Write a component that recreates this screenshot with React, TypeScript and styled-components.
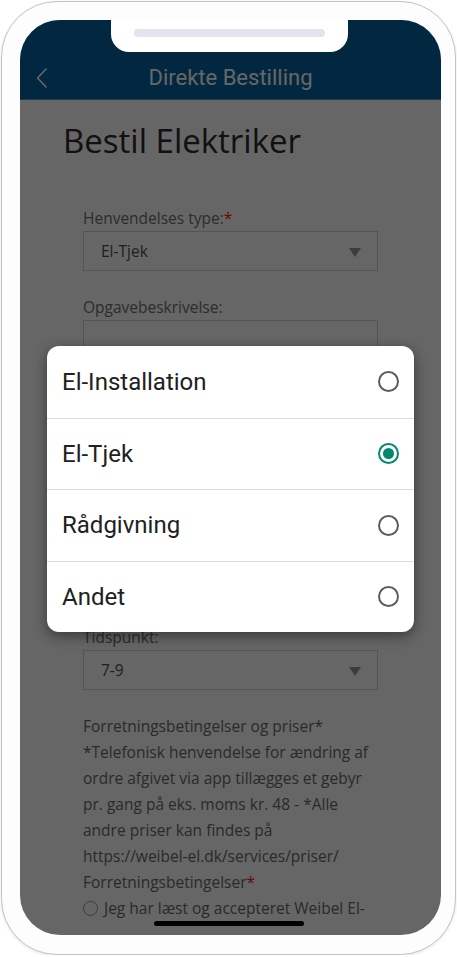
import React from "react";
import styled, { createGlobalStyle } from "styled-components";

const GlobalStyle = createGlobalStyle`
  html, body { margin: 0; padding: 0; background: #ffffff; }
  body { font-family: "Open Sans", "Liberation Sans", sans-serif; }
  * { box-sizing: border-box; }
`;

const Phone = styled.div`
  width: 455px;
  height: 954px;
  margin: 1px 0 0 1px;
  border: 1px solid #c4c4c4;
  border-radius: 56px;
  background: #fdfdfd;
  box-shadow: 0 1px 3px rgba(0, 0, 0, 0.1);
  padding: 18px 14px 19px 18px;
`;

const Screen = styled.div`
  position: relative;
  width: 421px;
  height: 915px;
  border-radius: 40px;
  overflow: hidden;
  background: #ffffff;
`;

const Header = styled.header`
  height: 80px;
  padding-top: 36px;
  background: #0362a2;
  border-bottom: 1px solid #5a8fbf;
`;

const HeaderRow = styled.div`
  display: grid;
  grid-template-columns: 1fr auto 1fr;
  align-items: center;
  height: 43px;
  padding: 0 16px;
`;

const BackButton = styled.button`
  justify-self: start;
  display: flex;
  align-items: center;
  padding: 0;
  border: 0;
  background: none;
`;

const HeaderTitle = styled.h2`
  margin: 0;
  font-family: Roboto, "Liberation Sans", sans-serif;
  font-weight: 400;
  font-size: 22px;
  color: #ffffff;
`;

const Content = styled.main`
  padding: 0 43px;
`;

const PageTitle = styled.h1`
  margin: 19px 0 0;
  font-family: "Open Sans", sans-serif;
  font-weight: 400;
  font-size: 33px;
  line-height: 44px;
  color: #2b2b2b;
`;

const Form = styled.form`
  display: flex;
  flex-direction: column;
  gap: 25px;
  margin-top: 44px;
  padding: 0 20px;
`;

const Field = styled.div`
  display: flex;
  flex-direction: column;
  gap: 2px;
`;

const Label = styled.label`
  font-size: 15.5px;
  line-height: 22px;
  color: #707070;
`;

const Required = styled.span`
  color: #ff1010;
`;

const SelectBox = styled.div`
  display: flex;
  align-items: center;
  justify-content: space-between;
  height: 40px;
  padding: 0 16px 0 17px;
  border: 1px solid #d2d2d2;
  font-size: 15.5px;
  color: #4e4e4e;
`;

const Caret = styled.span`
  width: 0;
  height: 0;
  border-left: 6px solid transparent;
  border-right: 6px solid transparent;
  border-top: 9px solid #969696;
  margin-top: 2px;
`;

const TextArea = styled.div<{ $h: number }>`
  height: ${(p) => p.$h}px;
  border: 1px solid #d2d2d2;
`;

const Terms = styled.div`
  margin-top: -2px;
  font-size: 15.5px;
  line-height: 26px;
  color: #6a6a6a;
`;

const Url = styled.span`
  white-space: nowrap;
`;

const CheckRow = styled.div`
  display: flex;
  align-items: center;
  gap: 6px;
`;

const SmallRadio = styled.span`
  width: 15px;
  height: 15px;
  border-radius: 50%;
  border: 1.5px solid #949494;
  flex: none;
`;

const Dim = styled.div`
  position: absolute;
  inset: 0;
  background: rgba(0, 0, 0, 0.6);
`;

const Sheet = styled.div`
  position: absolute;
  left: 27px;
  top: 326px;
  width: 367px;
  border-radius: 12px;
  background: #ffffff;
  overflow: hidden;
  box-shadow: 0 4px 14px rgba(0, 0, 0, 0.45);
`;

const Option = styled.div`
  display: flex;
  align-items: center;
  justify-content: space-between;
  height: 71.5px;
  padding: 0 15px 0 15px;
  font-family: Roboto, "Liberation Sans", sans-serif;
  font-size: 24px;
  color: #212121;
  & + & {
    border-top: 1px solid #dcdcdc;
  }
`;

const Radio = styled.span<{ $on?: boolean }>`
  display: flex;
  align-items: center;
  justify-content: center;
  width: 21px;
  height: 21px;
  border-radius: 50%;
  border: 2px solid ${(p) => (p.$on ? "#00876e" : "#5c5c5c")};
  &::after {
    content: "";
    display: ${(p) => (p.$on ? "block" : "none")};
    width: 11px;
    height: 11px;
    border-radius: 50%;
    background: #00876e;
  }
`;

const Notch = styled.div`
  position: absolute;
  top: 0;
  left: 91px;
  width: 237px;
  height: 32px;
  background: #ffffff;
  border-radius: 0 0 18px 18px;
  display: flex;
  justify-content: center;
  padding-top: 9px;
`;

const Speaker = styled.span`
  width: 191px;
  height: 8px;
  border-radius: 4px;
  background: #e3e4ef;
`;

const HomeBar = styled.div`
  position: absolute;
  left: 134px;
  top: 901px;
  width: 150px;
  height: 5px;
  border-radius: 3px;
  background: #000000;
`;

const options = ["El-Installation", "El-Tjek", "Rådgivning", "Andet"];

export default function App() {
  return (
    <>
      <GlobalStyle />
      <Phone>
        <Screen>
          <Header>
            <HeaderRow>
              <BackButton aria-label="Tilbage">
                <svg width="11" height="20" viewBox="0 0 11 20" fill="none">
                  <path d="M10 1 L1.5 10 L10 19" stroke="#ffffff" strokeWidth="1.6" strokeLinecap="round" strokeLinejoin="round" />
                </svg>
              </BackButton>
              <HeaderTitle>Direkte Bestilling</HeaderTitle>
              <span />
            </HeaderRow>
          </Header>
          <Content>
            <PageTitle>Bestil Elektriker</PageTitle>
            <Form>
              <Field>
                <Label>
                  Henvendelses type:<Required>*</Required>
                </Label>
                <SelectBox>
                  El-Tjek
                  <Caret />
                </SelectBox>
              </Field>
              <Field>
                <Label>Opgavebeskrivelse:</Label>
                <TextArea $h={281} />
              </Field>
              <Field>
                <Label>Tidspunkt:</Label>
                <SelectBox>
                  7-9
                  <Caret />
                </SelectBox>
              </Field>
              <Terms>
                Forretningsbetingelser og priser* *Telefonisk henvendelse for ændring af ordre afgivet via app tillægges et gebyr pr. gang på eks. moms kr. 48 - *Alle andre priser kan findes på <Url>https://weibel-el.dk/services/priser/</Url>
                <wbr />Forretningsbetingelser
                <Required>*</Required>
                <CheckRow>
                  <SmallRadio />
                  Jeg har læst og accepteret Weibel El-
                </CheckRow>
              </Terms>
            </Form>
          </Content>
          <Dim />
          <Sheet>
            {options.map((o) => (
              <Option key={o}>
                {o}
                <Radio $on={o === "El-Tjek"} />
              </Option>
            ))}
          </Sheet>
          <Notch>
            <Speaker />
          </Notch>
          <HomeBar />
        </Screen>
      </Phone>
    </>
  );
}
